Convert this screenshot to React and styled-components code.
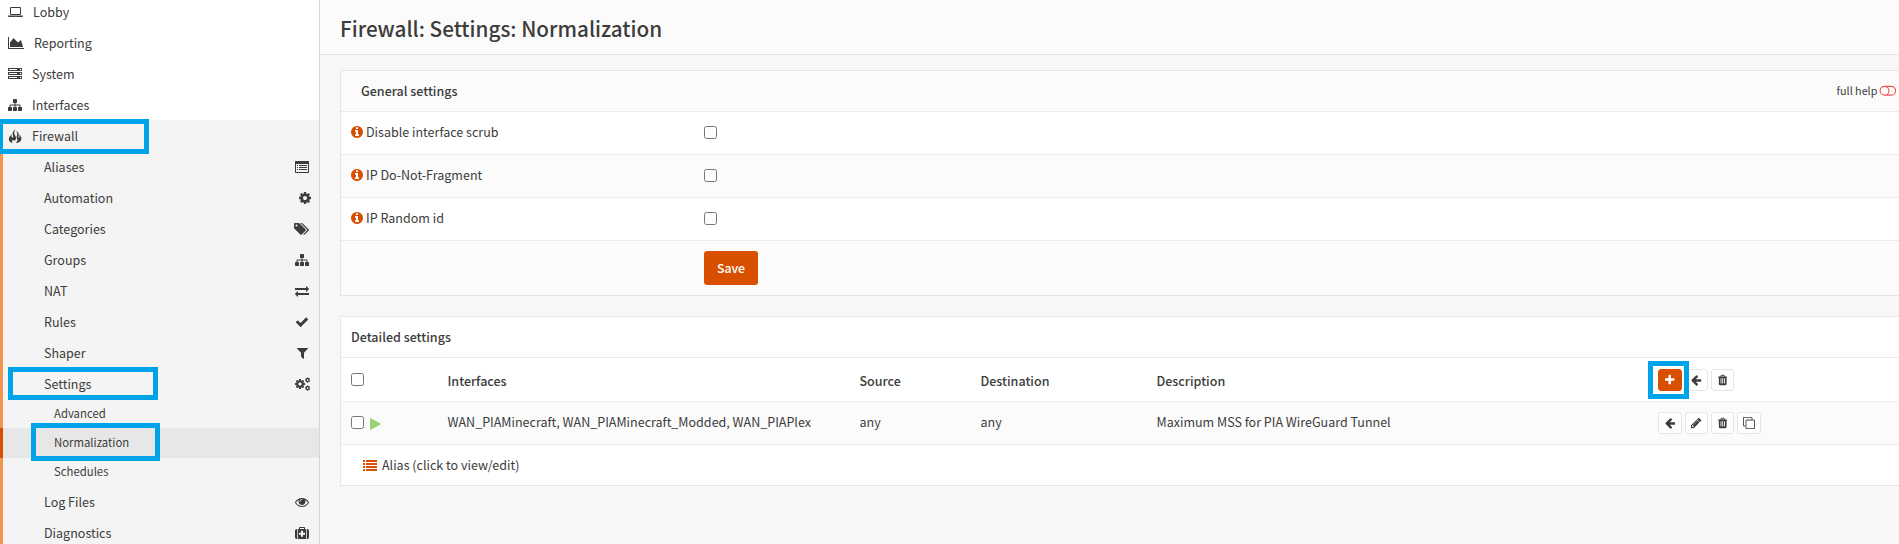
import React from 'react';
import styled, { createGlobalStyle, css } from 'styled-components';

const GlobalStyle = createGlobalStyle`
  * { box-sizing: border-box; }
  html, body { margin: 0; height: 544px; overflow: hidden; }
  body {
    background: #f7f7f7;
    color: #3c3c3b;
    font-family: "Noto Sans CJK SC", "Open Sans", sans-serif;
    font-size: 12.53px;
    line-height: 20px;
  }
`;

/* ---------- icons (1792 units per em unless an icon says otherwise) ---------- */

const Svg = styled.svg`
  display: block;
  flex: none;
  height: ${(p) => p.$size}px;
  width: ${(p) => p.$w}px;
  fill: currentColor;
`;

const COG =
  'M1152 896q0-106-75-181t-181-75-181 75-75 181 75 181 181 75 181-75 75-181zm512-109v222q0 12-8 23t-20 13l-185 28q-19 54-39 91 35 50 107 138 10 12 10 25t-9 23q-27 37-99 108t-94 71q-12 0-26-9l-138-108q-44 23-91 38-16 136-29 186-7 28-36 28h-222q-14 0-24.5-8.5t-11.5-21.5l-28-184q-49-16-90-37l-141 107q-10 9-25 9-14 0-25-11-126-114-165-168-7-10-7-23 0-12 8-23 15-21 51-66.5t54-70.5q-27-50-41-99l-183-27q-13-2-21-12.5t-8-23.5v-222q0-12 8-23t19-13l186-28q14-46 39-92-40-57-107-138-10-12-10-24 0-10 9-23 26-36 98.5-107.5t94.5-71.5q13 0 26 10l138 107q44-23 91-38 16-136 29-186 7-28 36-28h222q14 0 24.5 8.5t11.5 21.5l28 184q49 16 90 37l142-107q9-9 24-9 13 0 25 10 129 119 165 170 7 8 7 22 0 12-8 23-15 21-51 66.5t-54 70.5q26 50 41 98l183 28q13 2 21 12.5t8 23.5z';

const ICONS = {
  laptop: { w: 1920, d: 'M416 1280q-66 0-113-47t-47-113v-704q0-66 47-113t113-47h1088q66 0 113 47t47 113v704q0 66-47 113t-113 47h-1088zm-32-864v704q0 13 9.5 22.5t22.5 9.5h1088q13 0 22.5-9.5t9.5-22.5v-704q0-13-9.5-22.5t-22.5-9.5h-1088q-13 0-22.5 9.5t-9.5 22.5zm1376 928h160v96q0 40-47 68t-113 28h-1600q-66 0-113-28t-47-68v-96h1760zm-720 96q16 0 16-16t-16-16h-160q-16 0-16 16t16 16h160z' },
  chart: { w: 2048, d: 'M2048 1536v128h-2048v-1536h128v1408h1920zm-384-1024l256 896h-1664v-576l448-576 576 576z' },
  server: { w: 1792, d: 'M128 1408h1024v-128h-1024v128zm0-512h1024v-128h-1024v128zm1568 448q0-40-28-68t-68-28-68 28-28 68 28 68 68 28 68-28 28-68zm-1568-960h1024v-128h-1024v128zm1568 448q0-40-28-68t-68-28-68 28-28 68 28 68 68 28 68-28 28-68zm0-512q0-40-28-68t-68-28-68 28-28 68 28 68 68 28 68-28 28-68zm96 832v384h-1792v-384h1792zm0-512v384h-1792v-384h1792zm0-512v384h-1792v-384h1792z' },
  sitemap: { w: 1792, d: 'M1792 1248v320q0 40-28 68t-68 28h-320q-40 0-68-28t-28-68v-320q0-40 28-68t68-28h96v-192h-512v192h96q40 0 68 28t28 68v320q0 40-28 68t-68 28h-320q-40 0-68-28t-28-68v-320q0-40 28-68t68-28h96v-192h-512v192h96q40 0 68 28t28 68v320q0 40-28 68t-68 28h-320q-40 0-68-28t-28-68v-320q0-40 28-68t68-28h96v-192q0-52 38-90t90-38h512v-192h-96q-40 0-68-28t-28-68v-320q0-40 28-68t68-28h320q40 0 68 28t28 68v320q0 40-28 68t-68 28h-96v192h512q52 0 90 38t38 90v192h96q40 0 68 28t28 68z' },
  fire: { em: 14, w: 14, d: 'M7.6.6C4.2 2.8 4.2 4.8 5 6.6C5.5 8 5.1 8.6 4.5 8.6C3.7 8.6 3.3 7.6 3.6 5.6C1.5 7.2.8 8.8.9 10.4C1 12.2 2.4 13.3 4.8 13.9C3.6 12.6 3.9 11.6 5 10.8C5.8 12.4 8 11.6 8 9.2C8 6.8 6 5.8 6.2 3.8C6.3 2.6 6.8 1.5 7.6.6ZM8.2 2C10.6 3.4 11.2 5 10.6 6.8C10.2 8 10.4 8.8 11 8.7C11.6 8.5 11.7 7.4 11.2 5.6C13.2 7.2 13.6 8.8 13.3 10.4C12.8 12.4 11 13.6 7.6 14C9.4 12.8 9.9 11.4 9.2 10C8.4 8.6 8.4 7.6 9 6.4C9.5 5.2 9.3 3.6 8.2 2Z' },
  listAlt: { w: 1792, d: 'M96 128h1600q96 0 96 96v1344q0 96-96 96h-1600q-96 0-96-96v-1344q0-96 96-96zM128 512v992q0 32 32 32h1472q32 0 32-32v-992zM256 640h128v128h-128zM256 896h128v128h-128zM256 1152h128v128h-128zM512 640h1024v128h-1024zM512 896h1024v128h-1024zM512 1152h1024v128h-1024z' },
  cog: { x: 128, w: 1536, d: COG },
  tags: { w: 1920, d: 'M448 448q0-53-37.5-90.5t-90.5-37.5-90.5 37.5-37.5 90.5 37.5 90.5 90.5 37.5 90.5-37.5 37.5-90.5zm1067 576q0 53-37 90l-491 492q-39 37-91 37-53 0-90-37l-715-716q-38-37-64.5-101t-26.5-117v-416q0-52 38-90t90-38h416q53 0 117 26.5t102 64.5l715 714q37 39 37 91zm384 0q0 53-37 90l-491 492q-39 37-91 37-36 0-59-14t-53-45l470-470q37-37 37-90 0-52-37-91l-715-714q-38-38-102-64.5t-117-26.5h224q53 0 117 26.5t102 64.5l715 714q37 39 37 91z' },
  exchange: { w: 1792, d: 'M1792 1184v192q0 13-9.5 22.5t-22.5 9.5h-1376v192q0 13-9.5 22.5t-22.5 9.5q-12 0-24-10l-319-320q-9-9-9-22 0-14 9-23l320-320q9-9 23-9 13 0 22.5 9.5t9.5 22.5v192h1376q13 0 22.5 9.5t9.5 22.5zm0-544q0 14-9 23l-320 320q-9 9-23 9-13 0-22.5-9.5t-9.5-22.5v-192h-1376q-13 0-22.5-9.5t-9.5-22.5v-192q0-13 9.5-22.5t22.5-9.5h1376v-192q0-14 9-23t23-9q12 0 24 10l319 319q9 9 9 23z' },
  check: { w: 1792, d: 'M1671 566q0 40-28 68l-724 724-136 136q-28 28-68 28t-68-28l-136-136-362-362q-28-28-28-68t28-68l136-136q28-28 68-28t68 28l294 295 656-657q28-28 68-28t68 28l136 136q28 28 28 68z' },
  filter: { x: 192, w: 1408, d: 'M1595 295q17 41-14 70l-493 493v742q0 42-39 59-13 5-25 5-27 0-45-19l-256-256q-19-19-19-45v-486l-493-493q-31-29-14-70 17-39 59-39h1280q42 0 59 39z' },
  eye: { w: 1792, d: 'M1664 960q-152-236-381-353 61 104 61 225 0 185-131.5 316.5t-316.5 131.5-316.5-131.5-131.5-316.5q0-121 61-225-229 117-381 353 133 205 333.5 326.5t434.5 121.5 434.5-121.5 333.5-326.5zm-720-384q0-20-14-34t-34-14q-125 0-214.5 89.5t-89.5 214.5q0 20 14 34t34 14 34-14 14-34q0-86 61-147t147-61q20 0 34-14t14-34zm848 384q0 34-20 69-140 230-376.5 368.5t-499.5 138.5-499.5-139-376.5-368q-20-35-20-69t20-69q140-229 376.5-368t499.5-139 499.5 139 376.5 368q20 35 20 69z' },
  medkit: { w: 1792, d: 'M1280 1088v-192q0-14-9-23t-23-9h-224v-224q0-14-9-23t-23-9h-192q-14 0-23 9t-9 23v224h-224q-14 0-23 9t-9 23v192q0 14 9 23t23 9h224v224q0 14 9 23t23 9h192q14 0 23-9t9-23v-224h224q14 0 23-9t9-23zm-640-704h512v-128h-512v128zm-384 0v1280h-32q-92 0-158-66t-66-158v-832q0-92 66-158t158-66h32zM1440 384v1280h-1088v-1280h160v-160q0-40 28-68t68-28h576q40 0 68 28t28 68v160zM1792 608v832q0 92-66 158t-158 66h-32v-1280h32q92 0 158 66t66 158z' },
  info: { x: 128, w: 1536, d: 'M1152 1376v-160q0-14-9-23t-23-9h-96v-512q0-14-9-23t-23-9h-320q-14 0-23 9t-9 23v160q0 14 9 23t23 9h96v320h-96q-14 0-23 9t-9 23v160q0 14 9 23t23 9h448q14 0 23-9t9-23zm-128-896v-160q0-14-9-23t-23-9h-192q-14 0-23 9t-9 23v160q0 14 9 23t23 9h192q14 0 23-9t9-23zm640 416q0 209-103 385.5t-279.5 279.5-385.5 103-385.5-103-279.5-279.5-103-385.5 103-385.5 279.5-279.5 385.5-103 385.5 103 279.5 279.5 103 385.5z' },
  plus: { x: 192, w: 1408, d: 'M1600 736v192q0 40-28 68t-68 28h-416v416q0 40-28 68t-68 28h-192q-40 0-68-28t-28-68v-416h-416q-40 0-68-28t-28-68v-192q0-40 28-68t68-28h416v-416q0-40 28-68t68-28h192q40 0 68 28t28 68v416h416q40 0 68 28t28 68z' },
  arrow: { x: 128, w: 1536, d: 'M1664 896v128q0 53-32.5 90.5t-84.5 37.5h-704l293 294q38 36 38 90t-38 90l-75 76q-37 37-90 37-52 0-91-37l-651-652q-37-37-37-90 0-52 37-91l651-650q38-38 91-38 52 0 90 38l75 74q38 38 38 91t-38 91l-293 293h704q52 0 84.5 37.5t32.5 90.5z' },
  pencil: { x: 128, w: 1536, d: 'M491 1536l91-91-235-235-91 91v107h128v128h107zm523-928q0-22-22-22-10 0-17 7l-542 542q-7 7-7 17 0 22 22 22 10 0 17-7l542-542q7-7 7-17zm-54-192l416 416-832 832h-416v-416zm683 96q0 53-37 90l-166 166-416-416 166-165q36-38 90-38 53 0 91 38l235 234q37 39 37 91z' },
  trash: { x: 192, w: 1408, d: 'M704 1376v-704q0-14-9-23t-23-9h-64q-14 0-23 9t-9 23v704q0 14 9 23t23 9h64q14 0 23-9t9-23zm256 0v-704q0-14-9-23t-23-9h-64q-14 0-23 9t-9 23v704q0 14 9 23t23 9h64q14 0 23-9t9-23zm256 0v-704q0-14-9-23t-23-9h-64q-14 0-23 9t-9 23v704q0 14 9 23t23 9h64q14 0 23-9t9-23zm-544-992h448l-48-117q-7-9-17-11h-317q-10 2-17 11zm928 32v64q0 14-9 23t-23 9h-96v948q0 83-47 143.5t-113 60.5h-832q-66 0-113-58.5t-47-141.5v-952h-96q-14 0-23-9t-9-23v-64q0-14 9-23t23-9h309l70-167q15-37 54-63t79-26h320q40 0 79 26t54 63l70 167h309q14 0 23 9t9 23z' },
  clone: { w: 1792, d: 'M1664 1632v-1088q0-13-9.5-22.5t-22.5-9.5h-1088q-13 0-22.5 9.5t-9.5 22.5v1088q0 13 9.5 22.5t22.5 9.5h1088q13 0 22.5-9.5t9.5-22.5zm128-1088v1088q0 66-47 113t-113 47h-1088q-66 0-113-47t-47-113v-1088q0-66 47-113t113-47h1088q66 0 113 47t47 113zm-384-384v160h-128v-160q0-13-9.5-22.5t-22.5-9.5h-1088q-13 0-22.5 9.5t-9.5 22.5v1088q0 13 9.5 22.5t22.5 9.5h160v128h-160q-66 0-113-47t-47-113v-1088q0-66 47-113t113-47h1088q66 0 113 47t47 113z' },
  list: { w: 1792, d: 'M0 256h256v256h-256zM0 640h256v256h-256zM0 1024h256v256h-256zM0 1408h256v256h-256zM384 256h1408v256h-1408zM384 640h1408v256h-1408zM384 1024h1408v256h-1408zM384 1408h1408v256h-1408z' },
  play: { x: 192, w: 1408, d: 'M1576 927l-1328 738q-23 13-39.5 3t-16.5-36v-1472q0-26 16.5-36t39.5 3l1328 738q23 13 23 31t-23 31z' },
  toggle: { w: 2048, d: 'M640 320h768a576 576 0 0 1 0 1152h-768a576 576 0 0 1 0-1152zM640 448a448 448 0 0 0 0 896a448 448 0 0 0 0-896zM998 448q218 170 218 448t-218 448h410a448 448 0 0 0 0-896z' },
};

function Icon({ name, size = 14 }) {
  if (name === 'cogs') {
    return (
      <Svg $size={size} $w={(size * 1920) / 1792} viewBox="0 0 1920 1792">
        <g fillRule="evenodd">
          <path d={COG} transform="translate(-107 149) scale(0.833)" />
          <path d={COG} transform="translate(1226 -8) scale(0.44)" />
          <path d={COG} transform="translate(1226 1016) scale(0.44)" />
        </g>
      </Svg>
    );
  }
  const { x = 0, w, d, em = 1792 } = ICONS[name];
  return (
    <Svg $size={size} $w={(size * w) / em} viewBox={`${x} 0 ${w} ${em}`}>
      <path d={d} fillRule="evenodd" />
    </Svg>
  );
}

/* ---------- layout ---------- */

const Page = styled.div`
  display: flex;
  width: 1899px;
  height: 544px;
  overflow: hidden;
`;

const Sidebar = styled.nav`
  flex: none;
  width: 320px;
  height: 544px;
  overflow: hidden;
  background: #fff;
  border-right: 1px solid #d5d5d5;
`;

const MenuItem = styled.div`
  position: relative;
  display: flex;
  align-items: center;
  gap: 10px;
  height: ${(p) => (p.$first ? 27 : 31)}px;
  padding: 0 8px;
  padding-bottom: ${(p) => (p.$first ? 4 : 0)}px;
  background: ${(p) => (p.$open ? '#f4f4f4' : 'transparent')};
`;

const SubMenu = styled.div`
  background: #f4f4f4;
`;

const SubItem = styled.div`
  position: relative;
  display: flex;
  align-items: center;
  justify-content: space-between;
  height: 31px;
  padding: 0 ${(p) => p.$end}px 0 41px;
  border-left: 3px solid #f0964f;
`;

const LeafItem = styled.div`
  position: relative;
  display: flex;
  align-items: center;
  height: ${(p) => p.$h}px;
  padding: 0 0 2px 51px;
  font-size: 11.35px;
  border-left: 3px solid ${(p) => (p.$active ? '#d94f00' : '#f0964f')};
  background: ${(p) => (p.$active ? '#e7e7e7' : 'transparent')};
`;

const Highlight = styled.span`
  position: absolute;
  z-index: 2;
  border: 5px solid #00a2e8;
  pointer-events: none;
  left: ${(p) => p.$x}px;
  top: ${(p) => p.$y}px;
  width: ${(p) => p.$w}px;
  height: ${(p) => p.$h}px;
`;

const Label = styled.span`
  white-space: nowrap;
`;

const strong = css`
  font-weight: 500;
`;

const Main = styled.main`
  flex: 1;
  min-width: 0;
`;

const PageHeader = styled.header`
  display: flex;
  align-items: center;
  height: 55px;
  padding: 2px 0 0 20px;
  background: #fbfbfb;
  border-bottom: 1px solid #e5e5e5;
`;

const Title = styled.h1`
  margin: 0;
  font-size: 20.7px;
  line-height: 24px;
  white-space: nowrap;
  ${strong}
`;

const Content = styled.div`
  display: flex;
  flex-direction: column;
  gap: 20px;
  padding: 15px 0 0 20px;
`;

const Card = styled.section`
  background: #fff;
  border: 1px solid #e5e5e5;
  border-right: 0;
`;

const Row = styled.div`
  display: flex;
  align-items: center;
  height: ${(p) => p.$h}px;
  padding: 0 0 ${(p) => p.$lift || 0}px 10px;
  background: ${(p) => (p.$shade ? '#fbfbfb' : '#fff')};
  border-bottom: ${(p) => (p.$last ? '0' : '1px solid #ebebeb')};
`;

const CardTitle = styled.div`
  flex: 1;
  padding-left: ${(p) => p.$indent || 0}px;
  ${strong}
`;

const FullHelp = styled.div`
  display: flex;
  align-items: center;
  gap: 2px;
  margin-right: 2px;
  font-size: 10.74px;
`;

const Accent = styled.span`
  display: inline-flex;
  color: ${(p) => p.$color};
`;

const FieldLabel = styled.div`
  display: flex;
  align-items: center;
  gap: 3px;
  width: 353px;
`;

const Check = styled.input.attrs({ type: 'checkbox' })`
  flex: none;
  width: 13px;
  height: 13px;
  margin: 0;
`;

const SaveButton = styled.button`
  width: 54px;
  height: 34px;
  padding: 0;
  border: 0;
  border-radius: 3px;
  background: #d94f00;
  color: #fff;
  font: inherit;
  font-size: 12.3px;
  ${strong}
`;

const GridRow = styled(Row)`
  display: grid;
  grid-template-columns: 96.5px 412px 121px 176px 501.5px 1fr;
  ${(p) => p.$head && strong}

  > ${Label} {
    ${(p) => (p.$head ? 'padding-top: 2px;' : 'padding-bottom: 2px;')}
  }
`;

const Selector = styled.div`
  display: flex;
  align-items: center;
  gap: 6px;
  padding-bottom: 1px;
`;

const PlayMark = styled(Accent)`
  padding-top: 3px;
`;

const Actions = styled.div`
  position: relative;
  display: flex;
  gap: 3px;
`;

const ActionButton = styled.button`
  display: flex;
  align-items: center;
  justify-content: center;
  width: ${(p) => p.$w || 23}px;
  height: 22px;
  padding: 0;
  color: ${(p) => (p.$primary ? '#fff' : '#3c3c3b')};
  background: ${(p) => (p.$primary ? '#d94f00' : '#fff')};
  border: 1px solid ${(p) => (p.$primary ? '#d94f00' : '#e5e5e5')};
  border-radius: 3px;
`;

const AliasLink = styled.div`
  display: flex;
  align-items: center;
  gap: 5px;
  padding-left: 12px;
`;

const topItems = [
  ['Lobby', 'laptop'],
  ['Reporting', 'chart'],
  ['System', 'server'],
  ['Interfaces', 'sitemap'],
];

const firewallItems = [
  ['Aliases', 'listAlt', 10],
  ['Automation', 'cog', 8],
  ['Categories', 'tags', 10],
  ['Groups', 'sitemap', 10],
  ['NAT', 'exchange', 10],
  ['Rules', 'check', 10],
  ['Shaper', 'filter', 11],
];

const lowerItems = [
  ['Log Files', 'eye', 10],
  ['Diagnostics', 'medkit', 10],
];

const fields = ['Disable interface scrub', 'IP Do-Not-Fragment', 'IP Random id'];

function SubEntry({ label, icon, end, children }) {
  return (
    <SubItem $end={end}>
      <Label>{label}</Label>
      <Icon name={icon} />
      {children}
    </SubItem>
  );
}

export default function App() {
  return (
    <Page>
      <GlobalStyle />
      <Sidebar>
        {topItems.map(([label, icon], i) => (
          <MenuItem key={label} $first={i === 0}>
            <Icon name={icon} />
            <Label>{label}</Label>
          </MenuItem>
        ))}
        <MenuItem $open>
          <Icon name="fire" />
          <Label>Firewall</Label>
          <Highlight $x={-2} $y={-1} $w={151} $h={35} />
        </MenuItem>
        <SubMenu>
          {firewallItems.map(([label, icon, end]) => (
            <SubEntry key={label} label={label} icon={icon} end={end} />
          ))}
          <SubEntry label="Settings" icon="cogs" end={9}>
            <Highlight $x={5} $y={-1} $w={150} $h={33} />
          </SubEntry>
          <LeafItem $h={29}>
            <Label>Advanced</Label>
          </LeafItem>
          <LeafItem $h={30} $active>
            <Label>Normalization</Label>
            <Highlight $x={28} $y={-5} $w={129} $h={38} />
          </LeafItem>
          <LeafItem $h={28}>
            <Label>Schedules</Label>
          </LeafItem>
          {lowerItems.map(([label, icon, end]) => (
            <SubEntry key={label} label={label} icon={icon} end={end} />
          ))}
        </SubMenu>
      </Sidebar>
      <Main>
        <PageHeader>
          <Title>Firewall: Settings: Normalization</Title>
        </PageHeader>
        <Content>
          <Card>
            <Row $h={41} $shade>
              <CardTitle $indent={10}>General settings</CardTitle>
              <FullHelp>
                <Label>full help</Label>
                <Accent $color="#f05050">
                  <Icon name="toggle" size={15.5} />
                </Accent>
              </FullHelp>
            </Row>
            {fields.map((label, i) => (
              <Row key={label} $h={43} $lift={2} $shade={i % 2 === 1}>
                <FieldLabel>
                  <Accent $color="#d94f00">
                    <Icon name="info" />
                  </Accent>
                  <Label>{label}</Label>
                </FieldLabel>
                <Check />
              </Row>
            ))}
            <Row $h={54} $shade $last>
              <FieldLabel />
              <SaveButton>Save</SaveButton>
            </Row>
          </Card>
          <Card>
            <Row $h={41}>
              <CardTitle>Detailed settings</CardTitle>
            </Row>
            <GridRow $h={44} $head>
              <Selector>
                <Check />
              </Selector>
              <Label>Interfaces</Label>
              <Label>Source</Label>
              <Label>Destination</Label>
              <Label>Description</Label>
              <Actions>
                <ActionButton $primary $w={24}>
                  <Icon name="plus" size={12} />
                </ActionButton>
                <ActionButton>
                  <Icon name="arrow" size={12} />
                </ActionButton>
                <ActionButton>
                  <Icon name="trash" size={12} />
                </ActionButton>
                <Highlight $x={-10} $y={-8} $w={41} $h={38} />
              </Actions>
            </GridRow>
            <GridRow $h={43} $shade>
              <Selector>
                <Check />
                <PlayMark $color="#9bd275">
                  <Icon name="play" />
                </PlayMark>
              </Selector>
              <Label>WAN_PIAMinecraft, WAN_PIAMinecraft_Modded, WAN_PIAPlex</Label>
              <Label>any</Label>
              <Label>any</Label>
              <Label>Maximum MSS for PIA WireGuard Tunnel</Label>
              <Actions>
                <ActionButton $w={24}>
                  <Icon name="arrow" size={12} />
                </ActionButton>
                <ActionButton>
                  <Icon name="pencil" size={12} />
                </ActionButton>
                <ActionButton>
                  <Icon name="trash" size={12} />
                </ActionButton>
                <ActionButton $w={24}>
                  <Icon name="clone" size={12} />
                </ActionButton>
              </Actions>
            </GridRow>
            <Row $h={40} $last>
              <AliasLink>
                <Accent $color="#d94f00">
                  <Icon name="list" />
                </Accent>
                <Label>Alias (click to view/edit)</Label>
              </AliasLink>
            </Row>
          </Card>
        </Content>
      </Main>
    </Page>
  );
}
